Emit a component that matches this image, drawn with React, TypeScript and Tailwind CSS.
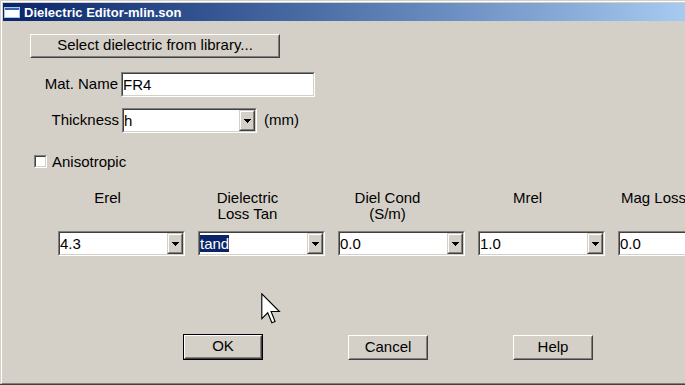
import React from "react";

type Kids = { className?: string; children?: React.ReactNode };

// classic win32 3d borders
function Sunken({ className = "", children }: Kids) {
  return (
    <div className={`border border-t-[#808080] border-l-[#808080] border-r-white border-b-white ${className}`}>
      <div className="flex h-full items-center border border-t-[#404040] border-l-[#404040] border-r-[#d4d0c8] border-b-[#d4d0c8] bg-white">
        {children}
      </div>
    </div>
  );
}

function Raised({ className = "", children }: Kids) {
  return (
    <div className={`border border-t-white border-l-white border-r-[#404040] border-b-[#404040] bg-[#d4d0c8] ${className}`}>
      <div className="flex h-full w-full items-center justify-center border border-t-[#d4d0c8] border-l-[#d4d0c8] border-r-[#808080] border-b-[#808080] pb-px">
        {children}
      </div>
    </div>
  );
}

function DropArrow() {
  return (
    <svg width="7" height="4" viewBox="0 0 7 4" shapeRendering="crispEdges">
      <path d="M0 0h7v1H0z M1 1h5v1H1z M2 2h3v1H2z M3 3h1v1H3z" fill="#000" />
    </svg>
  );
}

function Combo({ className = "", value, selected }: { className?: string; value: string; selected?: boolean }) {
  return (
    <Sunken className={className}>
      <div className="flex-1 overflow-hidden whitespace-nowrap leading-[17px]">
        {selected ? <span className="bg-[#0a246a] text-white">{value}</span> : value}
      </div>
      <div className="h-full border border-t-[#d4d0c8] border-l-[#d4d0c8] border-r-[#404040] border-b-[#404040] bg-[#d4d0c8]">
        <div className="flex h-full w-[14px] items-center justify-center border border-t-white border-l-white border-r-[#808080] border-b-[#808080]">
          <DropArrow />
        </div>
      </div>
    </Sunken>
  );
}

const columns = [
  { head: ["Erel"], value: "4.3" },
  { head: ["Dielectric", "Loss Tan"], value: "tand", selected: true },
  { head: ["Diel Cond", "(S/m)"], value: "0.0" },
  { head: ["Mrel"], value: "1.0" },
  { head: ["Mag Loss Tan"], value: "0.0" },
];

export default function App() {
  return (
    <div className="relative h-[385px] w-[685px] overflow-hidden border-b border-[#404040] bg-[#d4d0c8] pl-px pt-px font-['Liberation_Sans',Arial,sans-serif] text-[15px] text-black">
      <div className="h-full border-t border-l border-b border-t-white border-l-white border-b-[#808080] pl-px pt-px">
        {/* title bar */}
        <div className="flex h-[18px] items-center gap-[4px] bg-linear-to-r from-[#0a246a] to-[#a6caf0] pl-px">
          <svg width="16" height="11" viewBox="0 0 16 11" shapeRendering="crispEdges">
            <rect x="0" y="0" width="16" height="11" fill="#a6caf0" />
            <rect x="1" y="1" width="14" height="2" fill="#3a5fae" />
            <rect x="1" y="3" width="14" height="7" fill="#fff" />
          </svg>
          <span className="text-[13px] font-bold leading-none text-white">Dielectric Editor-mlin.son</span>
        </div>

        <div className="pt-[13px]">
          <Raised className="ml-[27px] h-[24px] w-[250px]">Select dielectric from library...</Raised>

          <div className="mt-[14px] flex items-center">
            <div className="w-[115px] text-right">Mat. Name</div>
            <Sunken className="ml-[3px] h-[25px] w-[194px]">
              <span className="leading-[17px]">FR4</span>
            </Sunken>
          </div>

          <div className="mt-[11px] flex items-center">
            <div className="w-[116px] text-right">Thickness</div>
            <Combo className="ml-[3px] h-[25px] w-[135px]" value="h" />
            <span className="ml-[7px]">(mm)</span>
          </div>

          <div className="mt-[20px] flex items-center">
            <Sunken className="ml-[31px] h-[13px] w-[13px]" />
            <span className="ml-[5px] leading-[17px]">Anisotropic</span>
          </div>

          <div className="mt-[20px] ml-[41px] grid grid-cols-[repeat(5,127px)] gap-x-[13px] leading-[16px]">
            {columns.map((c) => (
              <div key={c.value + c.head[0]} className="h-[34px] whitespace-nowrap text-center">
                {c.head.map((h) => (
                  <div key={h}>{h}</div>
                ))}
              </div>
            ))}
          </div>

          <div className="mt-[7px] ml-[55px] grid grid-cols-[repeat(5,127px)] gap-x-[13px]">
            {columns.map((c, i) =>
              i === 4 ? (
                <Sunken key={i} className="h-[25px]">
                  <span className="leading-[17px]">{c.value}</span>
                </Sunken>
              ) : (
                <Combo key={i} className="h-[25px]" value={c.value} selected={c.selected} />
              )
            )}
          </div>

          <div className="mt-[78px] ml-[180px] flex items-start gap-[85px]">
            <div className="h-[26px] w-[80px] border border-black">
              <Raised className="h-full w-full">OK</Raised>
            </div>
            <Raised className="mt-px h-[25px] w-[80px]">Cancel</Raised>
            <Raised className="mt-px h-[25px] w-[80px]">Help</Raised>
          </div>
        </div>
      </div>

      {/* mouse pointer */}
      <svg className="absolute left-[261px] top-[293px]" width="20" height="32" viewBox="0 0 12.5 20">
        <path
          d="M0.5 0.5 L0.5 16 L4.2 12.4 L6.8 18.6 L8.8 17.8 L6.3 11.6 L11.5 11.6 Z"
          fill="#fff"
          stroke="#000"
          strokeWidth="0.7"
          strokeLinejoin="miter"
        />
      </svg>
    </div>
  );
}
